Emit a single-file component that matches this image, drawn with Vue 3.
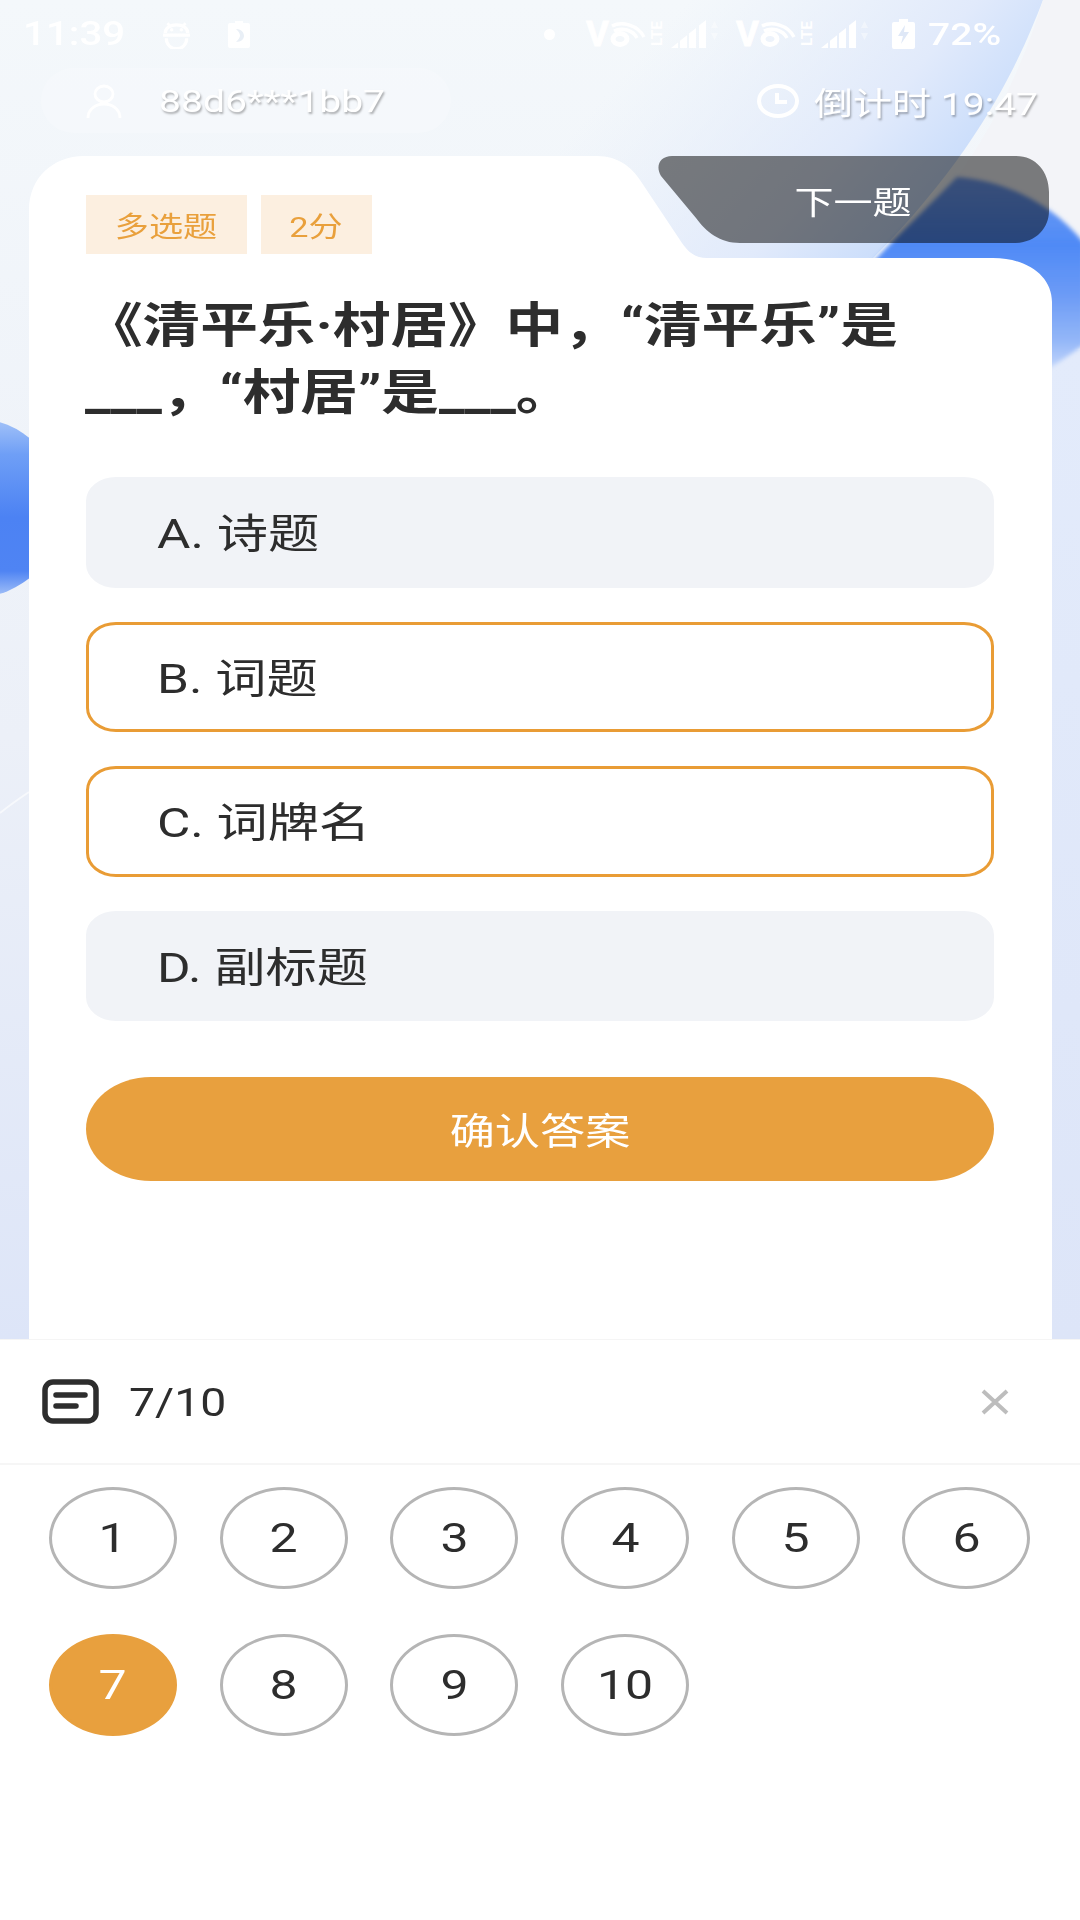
<script setup>
const options = [
  { key: 'A', text: '诗题', selected: false },
  { key: 'B', text: '词题', selected: true },
  { key: 'C', text: '词牌名', selected: true },
  { key: 'D', text: '副标题', selected: false }
]
const numbers = [1, 2, 3, 4, 5, 6, 7, 8, 9, 10]
const current = 7
const bars = [85, 94, 103, 113].map((x0) => {
  const x1 = x0 + 7
  const y = (x) => 30 - (x - 85) * 0.8
  return `${x0},30 ${x1},30 ${x1},${y(x1)} ${x0},${y(x0)}`
})
</script>

<template>
  <div class="page">
    <svg class="bg" viewBox="0 0 1080 1340" width="1080" height="1340" aria-hidden="true">
      <defs>
        <linearGradient id="base" x1="0" y1="0" x2="0" y2="1">
          <stop offset="0" stop-color="#f4f8fb" />
          <stop offset="0.55" stop-color="#ecf0f8" />
          <stop offset="1" stop-color="#dde5f8" />
        </linearGradient>
        <linearGradient id="tint" gradientUnits="userSpaceOnUse" x1="680" y1="10" x2="930" y2="230">
          <stop offset="0" stop-color="#e6eefb" stop-opacity="0" />
          <stop offset="0.65" stop-color="#e1eafb" />
          <stop offset="1" stop-color="#c6dbfb" />
        </linearGradient>
        <linearGradient id="blue" gradientUnits="userSpaceOnUse" x1="0" y1="175" x2="0" y2="375">
          <stop offset="0" stop-color="#4a84f2" stop-opacity="0.75" />
          <stop offset="0.35" stop-color="#4f8af6" />
          <stop offset="0.6" stop-color="#6c9bf6" />
          <stop offset="0.83" stop-color="#94b7f8" />
          <stop offset="0.93" stop-color="#b5cdfa" />
          <stop offset="1" stop-color="#dfe8fb" />
        </linearGradient>
        <linearGradient id="blob" x1="0" y1="0" x2="0" y2="1">
          <stop offset="0" stop-color="#a5c4f8" />
          <stop offset="0.2" stop-color="#6f9ff6" />
          <stop offset="0.55" stop-color="#4c82f3" />
          <stop offset="0.85" stop-color="#4f84f3" />
          <stop offset="1" stop-color="#a9c5f8" />
        </linearGradient>
        <linearGradient id="side" x1="0" y1="0" x2="0" y2="1">
          <stop offset="0" stop-color="#e3ebfb" />
          <stop offset="1" stop-color="#dde5f8" />
        </linearGradient>
        <filter id="soft"><feGaussianBlur stdDeviation="2" /></filter>
      </defs>
      <rect width="1080" height="1340" fill="url(#base)" />
      <rect x="1050" y="350" width="30" height="990" fill="url(#side)" />
      <path d="M560 0 H1043 C1020 60 980 150 873 258 H560 Z" fill="url(#tint)" />
      <path d="M1043 0 H1080 V262 L957 177 C995 125 1025 60 1043 0 Z" fill="#f3f4f8" />
      <path d="M873 262 C905 228 935 200 957 177 C1000 180 1050 200 1084 243 V345 L1050 368 H860 Z" fill="url(#blue)" filter="url(#soft)" />
      <circle cx="-27" cy="508" r="90" fill="url(#blob)" />
      <path d="M0 813 C10 805 20 798 29 792" fill="none" stroke="#ffffff" stroke-width="2" opacity="0.6" />
    </svg>

    <header class="status">
      <span class="time"><span class="sx-left">11:39</span></span>
      <svg class="st-robot" width="29" height="29" viewBox="0 0 27 27" aria-hidden="true">
        <path d="M5 3 L8 6 M22 3 L19 6" stroke="#fff" stroke-width="2.5" />
        <path d="M3 12 C3 2 24 2 24 12 M1 14 H26 M4 17 C4 30 23 30 23 17" fill="none" stroke="#fff" stroke-width="3" />
        <circle cx="9" cy="9" r="1.6" fill="#fff" /><circle cx="18" cy="9" r="1.6" fill="#fff" />
      </svg>
      <svg class="st-moon" width="22" height="27" viewBox="0 0 22 27" aria-hidden="true">
        <path d="M7 0 H15 V2 H20 A2 2 0 0 1 22 4 V25 A2 2 0 0 1 20 27 H2 A2 2 0 0 1 0 25 V4 A2 2 0 0 1 2 2 H7 Z" fill="#fff" />
        <path d="M8 8 C14 8 16 12 16 15 C16 18 13 21 8 21 C11 18 12 16 12 14.5 C12 12 10 10 8 8 Z" fill="#e9eff6" />
      </svg>
      <div class="st-right">
        <span class="st-dot"></span>
        <svg v-for="i in 2" :key="i" class="volte" width="135" height="32" viewBox="0 0 135 32" aria-hidden="true">
          <text x="0" y="28" class="v-letter">V</text>
          <ellipse cx="34" cy="21" rx="7" ry="5.5" fill="none" stroke="#fff" stroke-width="5" />
          <path d="M26 8 C36 3 52 7 58 19 M28 13 C36 9 47 12 51 20" fill="none" stroke="#fff" stroke-width="3.4" />
          <text class="lte" transform="translate(76 28) rotate(-90)" textLength="25" lengthAdjust="spacingAndGlyphs">LTE</text>
          <polygon v-for="(b, n) in bars" :key="n" :points="b" fill="#fff" />
          <path d="M125 10 L128.5 3 L132 10 Z M125 15 L128.5 22 L132 15 Z" fill="#fff" opacity="0.4" />
        </svg>
        <svg class="st-batt" width="23" height="30" viewBox="0 0 23 30" aria-hidden="true">
          <path d="M7 0 H16 V3 H21 A2 2 0 0 1 23 5 V28 A2 2 0 0 1 21 30 H2 A2 2 0 0 1 0 28 V5 A2 2 0 0 1 2 3 H7 Z" fill="#fff" />
          <path d="M13 6 L6 17 H11 L9 25 L17 13 H12 Z" fill="#dfe8f7" />
        </svg>
        <span class="pct"><span class="sx-left">72%</span></span>
      </div>
    </header>

    <div class="user-row">
      <div class="pill">
        <svg class="person" width="36" height="34" viewBox="0 0 36 34" aria-hidden="true">
          <ellipse cx="18" cy="10" rx="9" ry="8" fill="none" stroke="#fff" stroke-width="2.8" />
          <path d="M2 34 C2 25 10 20 18 20 C26 20 34 25 34 34" fill="none" stroke="#fff" stroke-width="2.8" />
        </svg>
        <span class="uid"><span class="sx-left">88d6***1bb7</span></span>
      </div>
      <div class="countdown">
        <svg width="42" height="34" viewBox="0 0 42 34" aria-hidden="true">
          <ellipse cx="21" cy="17" rx="19" ry="15" fill="none" stroke="#fff" stroke-width="4" />
          <path d="M20 9 V18 H30" fill="none" stroke="#fff" stroke-width="4" />
        </svg>
        <span class="cd-text"><span class="sx-left">倒计时 19:47</span></span>
      </div>
    </div>

    <main class="card">
      <svg class="card-shape" width="1023" height="1183" viewBox="0 0 1023 1183" aria-hidden="true">
        <path d="M0 1183 V54 C0 22 24 0 55 0 H568 C590 0 603 12 611 24 L651 84 C658 95 665 102 678 102 H964 C998 102 1023 120 1023 146 V1183 Z" fill="#fff" />
      </svg>
      <button class="next"><span class="sx">下一题</span></button>

      <div class="tags">
        <span class="tag t1"><span class="sx">多选题</span></span>
        <span class="tag t2"><span class="sx">2分</span></span>
      </div>
      <h1 class="question"><span class="q-in">《清平乐·村居》中，“清平乐”是___，“村居”是___。</span></h1>
      <div class="options">
        <div v-for="o in options" :key="o.key" class="option" :class="{ selected: o.selected }">
          <span class="opt-text">{{ o.key }}. {{ o.text }}</span>
        </div>
      </div>
      <div class="confirm"><span class="sx">确认答案</span></div>
    </main>

    <section class="sheet">
      <div class="sheet-head">
        <svg class="list-icon" width="57" height="45" viewBox="0 0 57 45" aria-hidden="true">
          <rect x="3" y="3" width="51" height="39" rx="8" fill="none" stroke="#2d2d2d" stroke-width="5.5" />
          <path d="M14 16 H43 M14 27 H34" fill="none" stroke="#2d2d2d" stroke-width="5.5" stroke-linecap="round" />
        </svg>
        <span class="count"><span class="sx-left">7/10</span></span>
        <svg class="close" width="28" height="26" viewBox="0 0 28 26" aria-hidden="true">
          <path d="M2 2 L26 24 M26 2 L2 24" stroke="#bdbdbd" stroke-width="4" fill="none" />
        </svg>
      </div>
      <div class="nums">
        <div v-for="n in numbers" :key="n" class="num" :class="{ active: n === current }">
          <span class="sx">{{ n }}</span>
        </div>
      </div>
    </section>
  </div>
</template>

<style>
html, body { margin: 0; padding: 0; }
</style>

<style scoped>
.page {
  position: relative;
  width: 1080px;
  height: 1920px;
  overflow: hidden;
  display: flex;
  flex-direction: column;
  font-family: Roboto, "Noto Sans CJK SC", sans-serif;
  color: #2d2d2d;
}
.bg { position: absolute; left: 0; top: 0; }
.sx { display: inline-block; transform: scaleX(1.22); white-space: nowrap; }
.sx-left { display: inline-block; transform: scaleX(1.22); transform-origin: left center; white-space: nowrap; }

.status {
  position: relative;
  height: 68px;
  display: flex;
  align-items: center;
  color: #fff;
}
.time { width: 99px; margin-left: 23px; font-size: 33px; font-weight: 500; line-height: 68px; }
.st-robot { margin-left: 40px; }
.st-moon { margin-left: 37px; }
.st-right { margin-left: auto; margin-right: 80px; display: flex; align-items: center; }
.st-dot { width: 11px; height: 11px; border-radius: 50%; background: #fff; margin-right: 31px; }
.volte { margin-right: 15px; overflow: visible; }
.volte + .volte { margin-right: 21px; }
.v-letter { font-size: 35px; font-weight: 700; fill: #fff; stroke: #fff; stroke-width: 0.8px; }
.lte { font-size: 15px; font-weight: 700; fill: #fff; }
.st-batt { margin-right: 13px; }
.pct { width: 72px; font-size: 32px; font-weight: 500; line-height: 68px; }

.user-row {
  position: relative;
  height: 88px;
  display: flex;
  justify-content: space-between;
  align-items: flex-start;
  color: #fff;
  text-shadow: 1px 2px 2px rgba(0, 0, 0, 0.3);
}
.pill {
  margin-left: 41px;
  width: 410px;
  height: 65px;
  border-radius: 33px;
  background: rgba(255, 255, 255, 0.22);
  display: flex;
  align-items: center;
  box-sizing: border-box;
  padding-left: 45px;
}
.uid { margin-left: 37px; font-size: 32px; }
.countdown { display: flex; align-items: center; height: 65px; margin-right: 42px; }
.cd-text { margin-left: 15px; width: 224px; font-size: 32px; }

.card {
  position: relative;
  flex: 1;
  min-height: 0;
  margin: 0 28px 0 29px;
  box-sizing: border-box;
  padding: 39px 58px 0 57px;
}
.card-shape { position: absolute; left: 0; top: 0; }
.next {
  position: absolute;
  left: 629px;
  top: 0;
  width: 391px;
  height: 87px;
  border: none;
  padding: 0;
  font: inherit;
  font-size: 32px;
  color: #fff;
  background: rgba(0, 0, 0, 0.5);
  clip-path: path("M14 0 H358 C378 0 391 16 391 36 V55 C391 72 378 87 356 87 H82 C62 87 48 76 38 62 L3 20 C-3 10 2 0 14 0 Z");
}
.tags { position: relative; display: flex; gap: 14px; }
.tag {
  height: 59px;
  background: #fcefe0;
  color: #e9a03c;
  font-size: 28px;
  display: flex;
  align-items: center;
  justify-content: center;
}
.t1 { width: 160.5px; }
.t2 { width: 111px; }
.question {
  position: relative;
  margin: 39px 0 0 -1px;
  width: 700px;
  font-size: 48px;
  font-weight: 700;
  line-height: 66.6px;
  transform: scaleX(1.2);
  transform-origin: left top;
}
.options { position: relative; margin-top: 51px; display: flex; flex-direction: column; gap: 34px; }
.option {
  height: 110.5px;
  box-sizing: border-box;
  background: #f1f3f7;
  border: 3.5px solid #f1f3f7;
  border-radius: 30px / 24px;
  padding: 0 0 4px 68px;
  font-size: 41px;
  display: flex;
  align-items: center;
}
.opt-text { display: inline-block; transform: scaleX(1.25); transform-origin: left center; white-space: nowrap; }
.option.selected { background: #fff; border-color: #e99c35; }
.confirm {
  position: relative;
  margin-top: 56px;
  height: 104px;
  border-radius: 65px / 52px;
  background: #e8a03e;
  color: #fff;
  font-size: 37px;
  display: flex;
  align-items: center;
  justify-content: center;
}

.sheet { position: relative; height: 581px; background: #fff; border-top: 1px solid #f5f5f5; box-sizing: border-box; }
.sheet-head {
  height: 125px;
  box-sizing: border-box;
  display: flex;
  align-items: center;
  border-bottom: 2px solid #f6f6f6;
  padding-left: 42px;
  padding-right: 71px;
}
.count { margin-left: 30px; font-size: 38px; padding-top: 2px; }
.close { margin-left: auto; }
.nums {
  display: grid;
  grid-template-columns: repeat(6, 128px);
  column-gap: 42.7px;
  row-gap: 45px;
  padding: 22px 0 0 49px;
}
.num {
  height: 102px;
  box-sizing: border-box;
  border: 3px solid #b5b5b5;
  border-radius: 50%;
  font-size: 41px;
  display: flex;
  align-items: center;
  justify-content: center;
}
.num.active { background: #e8a03e; border-color: #e8a03e; color: #fff; }
</style>
